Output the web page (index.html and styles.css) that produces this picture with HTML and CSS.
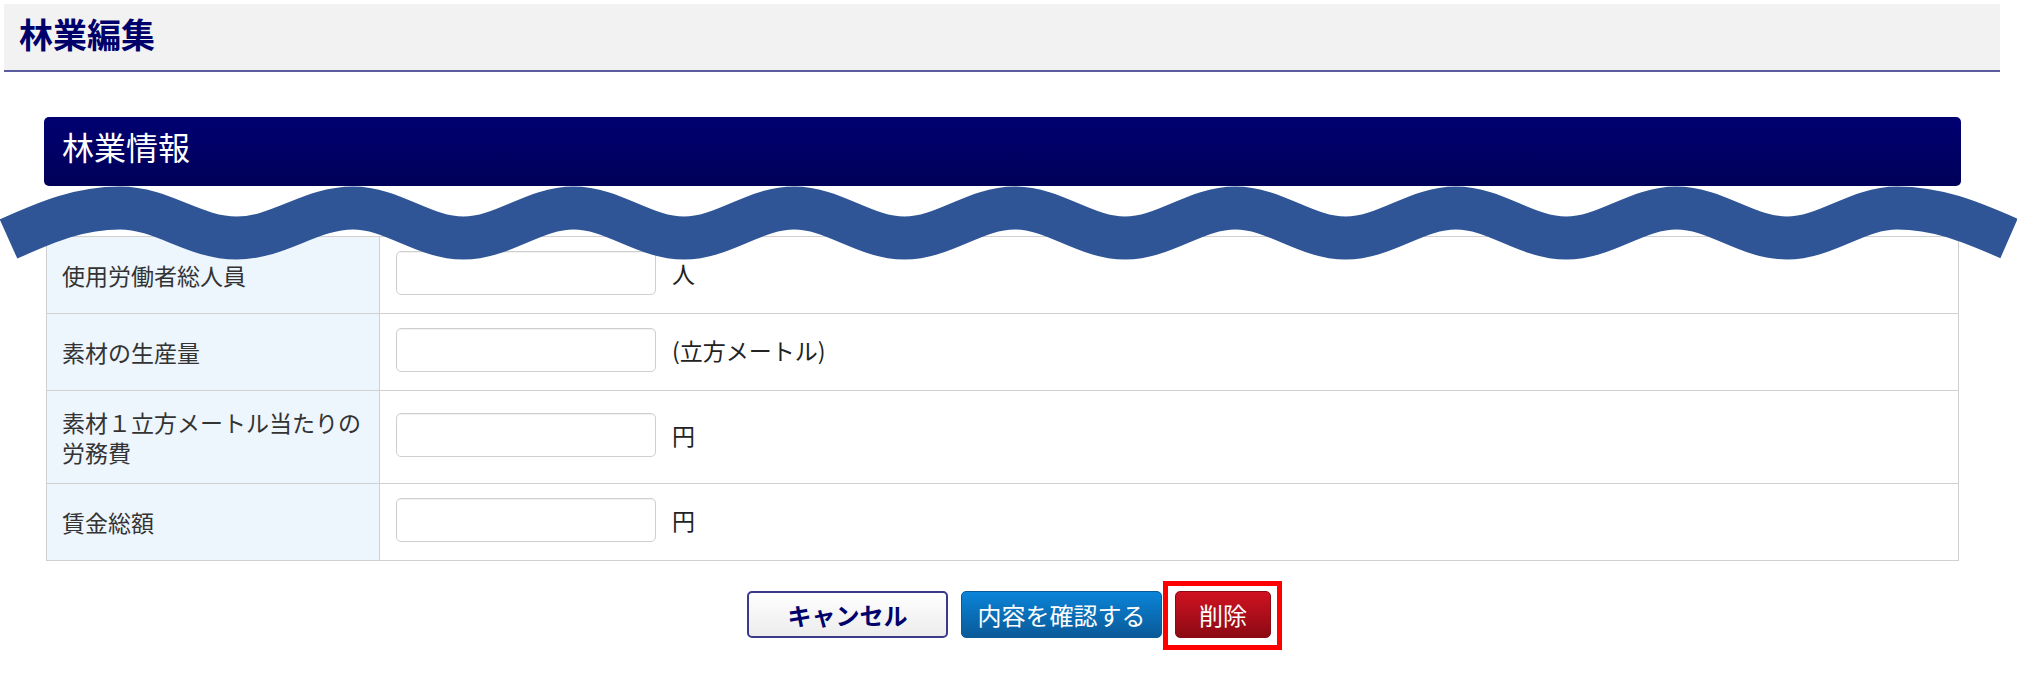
FILE: index.html
```html
<!DOCTYPE html>
<html lang="ja">
<head>
<meta charset="utf-8">
<title>林業編集</title>
<link rel="stylesheet" href="styles.css">
</head>
<body>
<div class="page">
  <header class="page-head">
    <h1 class="page-title">林業編集</h1>
  </header>

  <section class="panel">
    <h2 class="panel-title">林業情報</h2>
    <table class="form-table">
      <colgroup>
        <col class="col-label">
        <col>
      </colgroup>
      <tbody>
        <tr>
          <th>使用労働者総人員</th>
          <td><div class="field"><input type="text" class="text-input"><span class="unit">人</span></div></td>
        </tr>
        <tr>
          <th>素材の生産量</th>
          <td><div class="field"><input type="text" class="text-input"><span class="unit">(立方メートル)</span></div></td>
        </tr>
        <tr>
          <th>素材１立方メートル当たりの労務費</th>
          <td><div class="field"><input type="text" class="text-input"><span class="unit">円</span></div></td>
        </tr>
        <tr>
          <th>賃金総額</th>
          <td><div class="field"><input type="text" class="text-input"><span class="unit">円</span></div></td>
        </tr>
      </tbody>
    </table>
  </section>

  <div class="actions">
    <button type="button" class="btn btn-cancel">キャンセル</button>
    <button type="button" class="btn btn-confirm">内容を確認する</button>
    <span class="highlight"><button type="button" class="btn btn-delete">削除</button></span>
  </div>
</div>

<svg class="wave" width="2017" height="676" viewBox="0 0 2017 676" aria-hidden="true">
  <path d="M 8.5 239 C 48.5 221, 80 208, 120 208
           C 162.3 208, 194.2 238, 236.5 238
           C 278.8 238, 310.7 208, 353 208
           C 393 208, 423.3 238, 463.3 238
           C 503.3 238, 533.6 208, 573.6 208
           C 613.6 208, 643.9 238, 683.9 238
           C 723.9 238, 754.1 208, 794.1 208
           C 834.1 208, 864.4 238, 904.4 238
           C 944.4 238, 974.7 208, 1014.7 208
           C 1054.7 208, 1085 238, 1125 238
           C 1165 238, 1195.3 208, 1235.3 208
           C 1275.3 208, 1305.6 238, 1345.6 238
           C 1385.6 238, 1415.9 208, 1455.9 208
           C 1495.9 208, 1526.1 238, 1566.1 238
           C 1606.1 238, 1636.4 208, 1676.4 208
           C 1716.4 208, 1746.7 238, 1786.7 238
           C 1826.7 238, 1857 208, 1897 208
           C 1937 208, 1969 221, 2009 238.5"
        fill="none" stroke="#2f5597" stroke-width="43" stroke-linecap="butt"/>
</svg>
</body>
</html>
```

FILE: styles.css
```css
html, body {
  margin: 0;
  padding: 0;
  background: #ffffff;
}

body {
  position: relative;
  width: 2017px;
  min-height: 676px;
  overflow: hidden;
  font-family: "Noto Sans CJK JP", "Noto Sans", sans-serif;
  color: #333333;
}

.page {
  padding: 4px 17px 0 4px;
}

/* ---------- page header ---------- */
.page-head {
  height: 66px;
  background: #f2f2f2;
  border-bottom: 2px solid #5b5b9f;
  display: flex;
  align-items: center;
  padding-left: 15px;
}

.page-title {
  margin: 0 0 6px 0;
  font-size: 34px;
  line-height: 40px;
  font-weight: 700;
  color: #00006b;
}

/* ---------- panel ---------- */
.panel {
  margin: 45px 39px 0 40px;
}

.panel-title {
  margin: 0;
  height: 69px;
  box-sizing: border-box;
  padding: 0 0 11px 18px;
  line-height: 58px;
  font-size: 32px;
  font-weight: 400;
  color: #ffffff;
  border-radius: 5px;
  background: linear-gradient(#000072, #000058);
}

/* ---------- form table ---------- */
.form-table {
  margin: 50px 2px 0 2px;
  width: 1913px;
  border-collapse: collapse;
  table-layout: fixed;
  border: 1px solid #d0d0d0;
}

.col-label {
  width: 333px;
}

.form-table th,
.form-table td {
  border: 1px solid #d0d0d0;
  vertical-align: middle;
}

.form-table th {
  background: #edf5fd;
  text-align: left;
  font-weight: 400;
  font-size: 23px;
  line-height: 30px;
  color: #333333;
  padding: 16px 15px;
}

.form-table td {
  padding: 14px 16px 18px 16px;
  background: #ffffff;
}

.field {
  display: flex;
  align-items: center;
  gap: 16px;
}

.text-input {
  width: 260px;
  height: 44px;
  box-sizing: border-box;
  margin: 0;
  border: 1px solid #cfcfcf;
  border-radius: 5px;
  background: #ffffff;
  box-shadow: inset 0 1px 1px rgba(0, 0, 0, 0.06);
  font-family: inherit;
  font-size: 20px;
}

.unit {
  font-size: 23px;
  line-height: 30px;
  color: #222222;
}

/* ---------- actions ---------- */
.actions {
  display: flex;
  justify-content: center;
  align-items: center;
  gap: 13px;
  margin-top: 30px;
  padding-left: 14px;
}

.btn {
  height: 47px;
  box-sizing: border-box;
  margin: 0;
  border-radius: 5px;
  font-family: "Noto Sans CJK JP", "Noto Sans", sans-serif;
  font-size: 24px;
  line-height: 30px;
  cursor: pointer;
}

.btn-cancel {
  width: 201px;
  background: linear-gradient(#ffffff, #ececec);
  border: 2px solid #3a3a8a;
  color: #00006b;
  font-weight: 700;
}

.btn-confirm {
  width: 201px;
  padding: 0;
  background: linear-gradient(#0a84d8, #0a5a98);
  border: 1px solid #0a5a98;
  color: #ffffff;
  font-weight: 400;
}

.btn-delete {
  width: 96px;
  padding: 0;
  background: linear-gradient(#cf1220, #8c0a14);
  border: 1px solid #8c0a14;
  color: #ffffff;
  font-weight: 400;
}

.highlight {
  position: relative;
  display: inline-flex;
}

.highlight::after {
  content: "";
  position: absolute;
  top: -10px;
  left: -12px;
  right: -11px;
  bottom: -12px;
  border: 5px solid #ff0000;
  pointer-events: none;
}

/* ---------- omission wave ---------- */
.wave {
  position: absolute;
  top: 0;
  left: 0;
  pointer-events: none;
}
```
